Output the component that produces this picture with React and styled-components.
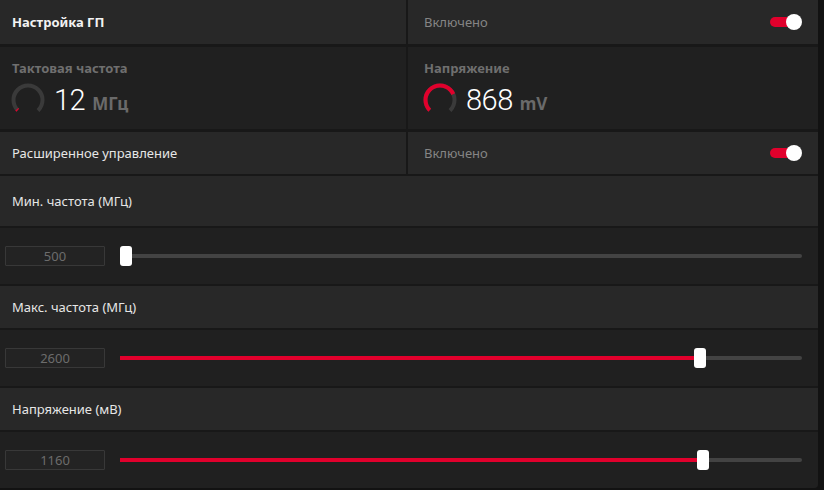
import React from "react";
import styled, { createGlobalStyle } from "styled-components";

const GlobalStyle = createGlobalStyle`
  html, body {
    margin: 0;
    padding: 0;
    background: #121212;
  }
  body {
    font-family: "Noto Sans", "Open Sans", sans-serif;
    -webkit-font-smoothing: antialiased;
  }
`;

const Panel = styled.div`
  width: 818px;
  height: 488px;
  background: #181818;
  display: flex;
  flex-direction: column;
  gap: 2px;
  border-bottom-right-radius: 4px;
  overflow: hidden;
`;

const SplitRow = styled.div`
  display: grid;
  grid-template-columns: 406px 1fr;
  column-gap: 2px;
  height: ${(p) => p.$h}px;
  margin-bottom: ${(p) => p.$after || 0}px;
`;

const Cell = styled.div`
  background: ${(p) => (p.$dark ? "#202020" : "#282828")};
  display: flex;
  align-items: center;
  padding: 0 16px 0 ${(p) => p.$pl || 12}px;
`;

const MetricCell = styled.div`
  background: #202020;
  display: flex;
  flex-direction: column;
  padding: 12px 12px 0 ${(p) => p.$pl || 11}px;
`;

const Title = styled.span`
  color: #f2f2f2;
  font-size: 13px;
  font-weight: 700;
`;

const Label = styled.span`
  color: #e6e6e6;
  font-size: 13px;
`;

const State = styled.span`
  color: #858585;
  font-size: 13px;
  flex: 1;
`;

const Toggle = styled.div`
  position: relative;
  width: 32px;
  height: 16px;
  &::before {
    content: "";
    position: absolute;
    left: 0;
    top: 3px;
    width: 28px;
    height: 10px;
    border-radius: 5px;
    background: #e1002c;
  }
  &::after {
    content: "";
    position: absolute;
    right: 0;
    top: 0;
    width: 16px;
    height: 16px;
    border-radius: 50%;
    background: #ffffff;
  }
`;

const MetricName = styled.div`
  color: #6f6f6f;
  font-size: 13px;
  font-weight: 700;
  padding-left: 1px;
`;

const MetricValueRow = styled.div`
  display: flex;
  align-items: center;
  gap: 9px;
  margin-top: 6px;
`;

const Value = styled.span`
  color: #ffffff;
  font-family: Roboto, "Noto Sans", sans-serif;
  font-size: 29px;
  font-weight: 300;
  letter-spacing: -0.5px;
  line-height: 1;
`;

const Unit = styled.span`
  color: #6a6a6a;
  font-size: 17px;
  font-weight: 700;
  margin-left: 7px;
`;

const Row = styled.div`
  height: ${(p) => p.$h}px;
  background: ${(p) => (p.$dark ? "#202020" : "#282828")};
  display: flex;
  align-items: center;
  padding: 0 16px 0 12px;
`;

const SliderRow = styled(Row)`
  padding-left: 5px;
  gap: 15px;
`;

const NumBox = styled.div`
  width: 98px;
  height: 18px;
  border: 1px solid #383838;
  background: #232323;
  color: #6c6c6c;
  font-size: 13px;
  line-height: 18px;
  text-align: center;
  border-radius: 1px;
`;

const Track = styled.div`
  position: relative;
  flex: 1;
  height: 4px;
  border-radius: 2px;
  background: #434343;
`;

const Fill = styled.div`
  position: absolute;
  left: 0;
  top: 0;
  height: 4px;
  background: #e1002c;
`;

const Thumb = styled.div`
  position: absolute;
  top: -8px;
  width: 12px;
  height: 20px;
  border-radius: 3px;
  background: #ffffff;
`;

function Gauge({ frac }) {
  const r = 14.5;
  const c = 2 * Math.PI * r;
  const arc = c * 0.75;
  return (
    <svg width="34" height="34" viewBox="0 0 34 34">
      <g transform="rotate(135 17 17)">
        <circle cx="17" cy="17" r={r} fill="none" stroke="#3a3a3a" strokeWidth="4" strokeDasharray={`${arc} ${c}`} />
        <circle cx="17" cy="17" r={r} fill="none" stroke="#e1002c" strokeWidth="4" strokeDasharray={`${arc * frac} ${c}`} />
      </g>
    </svg>
  );
}

function Slider({ value, pct }) {
  const w = 670;
  return (
    <SliderRow $h={56} $dark>
      <NumBox>{value}</NumBox>
      <Track>
        <Fill style={{ width: pct * w + 6 }} />
        <Thumb style={{ left: pct * w }} />
      </Track>
    </SliderRow>
  );
}

export default function App() {
  return (
    <>
      <GlobalStyle />
      <Panel>
        <SplitRow $h={44} $after={1}>
          <Cell>
            <Title>Настройка ГП</Title>
          </Cell>
          <Cell $pl={16}>
            <State>Включено</State>
            <Toggle />
          </Cell>
        </SplitRow>
        <SplitRow $h={82} $after={1}>
          <MetricCell>
            <MetricName>Тактовая частота</MetricName>
            <MetricValueRow>
              <Gauge frac={0.02} />
              <span>
                <Value>12</Value>
                <Unit>МГц</Unit>
              </span>
            </MetricValueRow>
          </MetricCell>
          <MetricCell $pl={15}>
            <MetricName>Напряжение</MetricName>
            <MetricValueRow>
              <Gauge frac={0.74} />
              <span>
                <Value>868</Value>
                <Unit>mV</Unit>
              </span>
            </MetricValueRow>
          </MetricCell>
        </SplitRow>
        <SplitRow $h={42}>
          <Cell>
            <Label>Расширенное управление</Label>
          </Cell>
          <Cell $pl={16}>
            <State>Включено</State>
            <Toggle />
          </Cell>
        </SplitRow>
        <Row $h={50}>
          <Label>Мин. частота (МГц)</Label>
        </Row>
        <Slider value="500" pct={0} />
        <Row $h={42}>
          <Label>Макс. частота (МГц)</Label>
        </Row>
        <Slider value="2600" pct={0.857} />
        <Row $h={42}>
          <Label>Напряжение (мВ)</Label>
        </Row>
        <Slider value="1160" pct={0.861} />
      </Panel>
    </>
  );
}
